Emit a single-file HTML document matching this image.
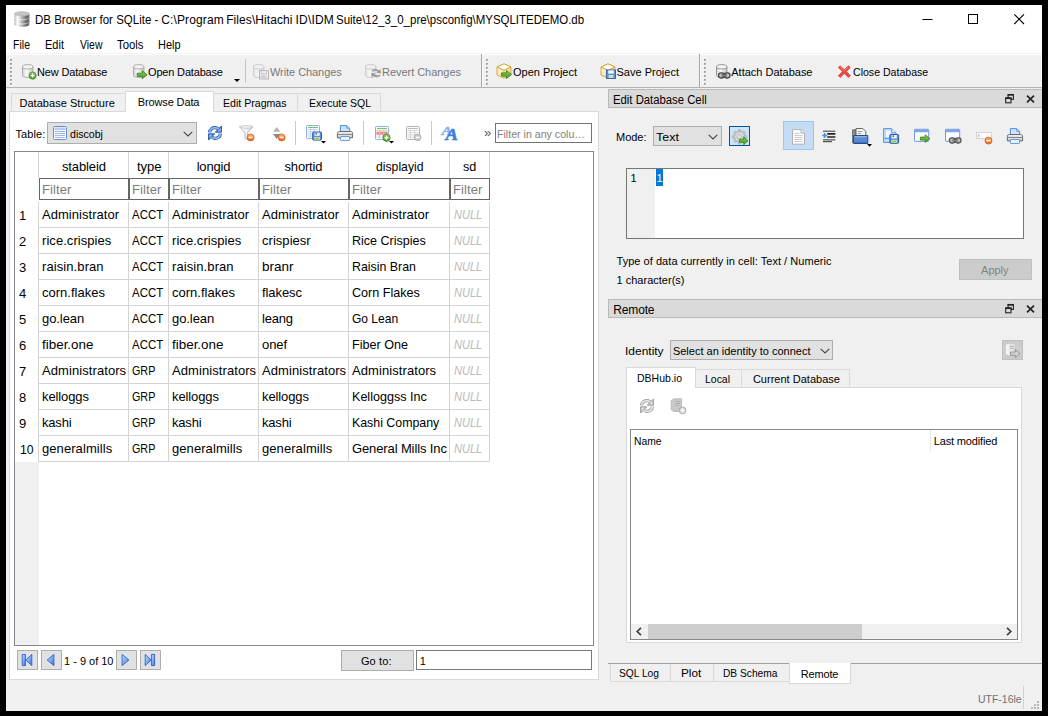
<!DOCTYPE html>
<html lang="en"><head><meta charset="utf-8"><title>DB Browser for SQLite</title>
<style>
html,body{margin:0;padding:0;background:#000}
body{width:1048px;height:716px;background:#000;position:relative;overflow:hidden;font-family:"Liberation Sans", sans-serif;font-size:11px;}
.a{position:absolute;}
.t{position:absolute;white-space:pre;line-height:20px;height:20px;transform-origin:0 50%;}
svg{position:absolute;overflow:visible}
</style></head>
<body>
<div class="a" style="left:6px;top:5px;width:1036px;height:706px;background:#f0f0f0;"></div>
<div class="a" style="left:6px;top:5px;width:1036px;height:49px;background:#ffffff;"></div>
<div class="a" style="left:6px;top:53px;width:1035px;height:1px;background:#f3f3f3;"></div>
<div class="a" style="left:6px;top:54px;width:1036px;height:1px;background:#ffffff;"></div>
<svg style="left:14px;top:10.500px" width="16" height="16" viewBox="0 0 16 16">
<defs><linearGradient id="dbg" x1="0" x2="1" y1="0" y2="0"><stop offset="0" stop-color="#b4b4b4"/><stop offset=".2" stop-color="#ffffff"/><stop offset=".5" stop-color="#b2b2b2"/><stop offset=".88" stop-color="#5c5c5c"/><stop offset="1" stop-color="#9a9a9a"/></linearGradient>
<linearGradient id="dbb" x1="0" x2="1" y1="0" y2="0"><stop offset="0" stop-color="#e8e8e8"/><stop offset=".3" stop-color="#ffffff"/><stop offset=".7" stop-color="#d0d0d0"/><stop offset="1" stop-color="#a8a8a8"/></linearGradient></defs>
<path d="M.4 2.600v10.600c0 1.500 3.400 2.600 7.600 2.600s7.600-1.100 7.600-2.600V2.600z" fill="url(#dbg)"/>
<path d="M.4 6.200c0 1.500 3.400 2.600 7.600 2.600s7.600-1.100 7.600-2.600M.4 10.400c0 1.500 3.400 2.600 7.600 2.600s7.600-1.100 7.600-2.600" fill="none" stroke="url(#dbb)" stroke-width=".9"/>
<ellipse cx="8" cy="2.700" rx="7.600" ry="2.100" fill="#c4c4c4" stroke="#b4b4b4" stroke-width=".5"/>
</svg>
<div id="title">
<span class="t" style="left:35.2px;top:10px;font-size:12px;color:#000;transform:scaleX(0.9580);">DB Browser for SQLite -</span>
 
<span class="t" style="left:161.2px;top:10px;font-size:12px;color:#000;letter-spacing:0.127px;">C:\Program</span>
 
<span class="t" style="left:226.2px;top:10px;font-size:12px;color:#000;letter-spacing:0.078px;">Files\Hitachi</span>
 
<span class="t" style="left:295.5px;top:10px;font-size:12px;color:#000;letter-spacing:0.191px;">ID\IDM</span>
 
<span class="t" style="left:336.4px;top:10px;font-size:12px;color:#000;transform:scaleX(0.9561);">Suite\12_3_0_pre\psconfig\MYSQLITEDEMO.db</span>
 
</div>
<svg style="left:915px;top:10px" width="120" height="20" viewBox="0 0 120 20">
<path d="M7.5 9.5h10" stroke="#000" stroke-width="1" fill="none"/>
<rect x="53.5" y="4.5" width="9" height="9" fill="none" stroke="#000" stroke-width="1"/>
<path d="M99.3 4.3l9.7 9.7M109 4.3l-9.7 9.7" stroke="#000" stroke-width="1.1" fill="none"/>
</svg>
<span class="t" style="left:12.5px;top:35px;font-size:12px;color:#000;transform:scaleX(0.8788);">File</span>
<span class="t" style="left:45px;top:35px;font-size:12px;color:#000;transform:scaleX(0.9184);">Edit</span>
<span class="t" style="left:79.5px;top:35px;font-size:12px;color:#000;transform:scaleX(0.8722);">View</span>
<span class="t" style="left:117px;top:35px;font-size:12px;color:#000;transform:scaleX(0.9459);">Tools</span>
<span class="t" style="left:157.5px;top:35px;font-size:12px;color:#000;transform:scaleX(0.9114);">Help</span>
<div class="a" style="left:6px;top:87px;width:1036px;height:1px;background:#b2b2b2;"></div>
<div class="a" style="left:1041px;top:55px;width:1px;height:32px;background:#ffffff;"></div>
<svg style="left:9.3px;top:58.200px" width="3" height="28" viewBox="0 0 3 28"><rect x="-.2" y="-0.2" width="2" height="2" fill="#ffffff"/><rect x=".9" y="0.9" width="1.800" height="1.800" fill="#929292"/><rect x="-.2" y="3.8" width="2" height="2" fill="#ffffff"/><rect x=".9" y="4.9" width="1.800" height="1.800" fill="#929292"/><rect x="-.2" y="7.8" width="2" height="2" fill="#ffffff"/><rect x=".9" y="8.9" width="1.800" height="1.800" fill="#929292"/><rect x="-.2" y="11.8" width="2" height="2" fill="#ffffff"/><rect x=".9" y="12.9" width="1.800" height="1.800" fill="#929292"/><rect x="-.2" y="15.8" width="2" height="2" fill="#ffffff"/><rect x=".9" y="16.9" width="1.800" height="1.800" fill="#929292"/><rect x="-.2" y="19.8" width="2" height="2" fill="#ffffff"/><rect x=".9" y="20.9" width="1.800" height="1.800" fill="#929292"/><rect x="-.2" y="23.8" width="2" height="2" fill="#ffffff"/><rect x=".9" y="24.9" width="1.800" height="1.800" fill="#929292"/></svg>
<svg style="left:485.3px;top:58.200px" width="3" height="28" viewBox="0 0 3 28"><rect x="-.2" y="-0.2" width="2" height="2" fill="#ffffff"/><rect x=".9" y="0.9" width="1.800" height="1.800" fill="#929292"/><rect x="-.2" y="3.8" width="2" height="2" fill="#ffffff"/><rect x=".9" y="4.9" width="1.800" height="1.800" fill="#929292"/><rect x="-.2" y="7.8" width="2" height="2" fill="#ffffff"/><rect x=".9" y="8.9" width="1.800" height="1.800" fill="#929292"/><rect x="-.2" y="11.8" width="2" height="2" fill="#ffffff"/><rect x=".9" y="12.9" width="1.800" height="1.800" fill="#929292"/><rect x="-.2" y="15.8" width="2" height="2" fill="#ffffff"/><rect x=".9" y="16.9" width="1.800" height="1.800" fill="#929292"/><rect x="-.2" y="19.8" width="2" height="2" fill="#ffffff"/><rect x=".9" y="20.9" width="1.800" height="1.800" fill="#929292"/><rect x="-.2" y="23.8" width="2" height="2" fill="#ffffff"/><rect x=".9" y="24.9" width="1.800" height="1.800" fill="#929292"/></svg>
<svg style="left:703.3px;top:58.200px" width="3" height="28" viewBox="0 0 3 28"><rect x="-.2" y="-0.2" width="2" height="2" fill="#ffffff"/><rect x=".9" y="0.9" width="1.800" height="1.800" fill="#929292"/><rect x="-.2" y="3.8" width="2" height="2" fill="#ffffff"/><rect x=".9" y="4.9" width="1.800" height="1.800" fill="#929292"/><rect x="-.2" y="7.8" width="2" height="2" fill="#ffffff"/><rect x=".9" y="8.9" width="1.800" height="1.800" fill="#929292"/><rect x="-.2" y="11.8" width="2" height="2" fill="#ffffff"/><rect x=".9" y="12.9" width="1.800" height="1.800" fill="#929292"/><rect x="-.2" y="15.8" width="2" height="2" fill="#ffffff"/><rect x=".9" y="16.9" width="1.800" height="1.800" fill="#929292"/><rect x="-.2" y="19.8" width="2" height="2" fill="#ffffff"/><rect x=".9" y="20.9" width="1.800" height="1.800" fill="#929292"/><rect x="-.2" y="23.8" width="2" height="2" fill="#ffffff"/><rect x=".9" y="24.9" width="1.800" height="1.800" fill="#929292"/></svg>
<div class="a" style="left:481px;top:54px;width:1px;height:33px;background:#a6a6a6;"></div>
<div class="a" style="left:482px;top:55px;width:1px;height:32px;background:#fafafa;"></div>
<div class="a" style="left:699px;top:54px;width:1px;height:33px;background:#a6a6a6;"></div>
<div class="a" style="left:700px;top:55px;width:1px;height:32px;background:#fafafa;"></div>
<div class="a" style="left:245px;top:59px;width:1px;height:24px;background:#c5c5c5;"></div>
<span class="t" style="left:37px;top:62px;font-size:11px;color:#000;letter-spacing:-0.151px;">New Database</span>
<span class="t" style="left:148px;top:62px;font-size:11px;color:#000;letter-spacing:-0.172px;">Open Database</span>
<span class="t" style="left:270px;top:62px;font-size:11px;color:#787878;letter-spacing:-0.064px;">Write Changes</span>
<span class="t" style="left:382px;top:62px;font-size:11px;color:#787878;letter-spacing:-0.038px;">Revert Changes</span>
<span class="t" style="left:513px;top:62px;font-size:11px;color:#000;letter-spacing:-0.018px;">Open Project</span>
<span class="t" style="left:616.5px;top:62px;font-size:11px;color:#000;letter-spacing:0.011px;">Save Project</span>
<span class="t" style="left:731.3px;top:62px;font-size:11px;color:#000;letter-spacing:-0.010px;">Attach Database</span>
<span class="t" style="left:853.3px;top:62px;font-size:11px;color:#000;transform:scaleX(0.9606);">Close Database</span>
<svg style="left:233.500px;top:79px" width="6" height="3" viewBox="0 0 6 3"><path d="M0 0h6L3 3z" fill="#000"/></svg>
<svg width="0" height="0" style="left:0;top:0"><defs>
<linearGradient id="cyl" x1="0" x2="1" y1="0" y2="0"><stop offset="0" stop-color="#d2d2d2"/><stop offset=".4" stop-color="#fafafa"/><stop offset="1" stop-color="#c4c4c4"/></linearGradient>
<linearGradient id="cyld" x1="0" x2="1" y1="0" y2="0"><stop offset="0" stop-color="#dcdcdc"/><stop offset=".4" stop-color="#f6f6f6"/><stop offset="1" stop-color="#d6d6d6"/></linearGradient>
<linearGradient id="grn" x1="0" x2="0" y1="0" y2="1"><stop offset="0" stop-color="#8fcf5a"/><stop offset="1" stop-color="#3f9a22"/></linearGradient>
<linearGradient id="org" x1="0" x2="0" y1="0" y2="1"><stop offset="0" stop-color="#ffb36b"/><stop offset="1" stop-color="#e8631a"/></linearGradient>
<linearGradient id="blu" x1="0" x2="0" y1="0" y2="1"><stop offset="0" stop-color="#9cc2f2"/><stop offset="1" stop-color="#3f78c9"/></linearGradient>
<linearGradient id="box" x1="0" x2="1" y1="0" y2="1"><stop offset="0" stop-color="#fff8dc"/><stop offset="1" stop-color="#f3d486"/></linearGradient>
<linearGradient id="prn" x1="0" x2="0" y1="0" y2="1"><stop offset="0" stop-color="#f4f4f4"/><stop offset="1" stop-color="#b9b9b9"/></linearGradient>
</defs></svg>
<svg style="left:22px;top:64px" width="16" height="16" viewBox="0 0 16 16"><path d="M.5 2.8v8.6c0 1.2 2.3 2.1 5.2 2.1s5.2-.9 5.2-2.1V2.8z" fill="url(#cyl)" stroke="#a6a6a6" stroke-width=".9"/><ellipse cx="5.7" cy="2.8" rx="5.2" ry="2.2" fill="#f2f2f2" stroke="#a6a6a6" stroke-width=".9"/><circle cx="10.6" cy="11.6" r="3.6" fill="url(#grn)" stroke="#3c8a20" stroke-width=".7"/><path d="M8.6 11.6h4M10.6 9.6v4" stroke="#fff" stroke-width="1.4"/></svg>
<svg style="left:133px;top:64px" width="16" height="16" viewBox="0 0 16 16"><path d="M.5 2.8v8.6c0 1.2 2.3 2.1 5.2 2.1s5.2-.9 5.2-2.1V2.8z" fill="url(#cyl)" stroke="#a6a6a6" stroke-width=".9"/><ellipse cx="5.7" cy="2.8" rx="5.2" ry="2.2" fill="#f2f2f2" stroke="#a6a6a6" stroke-width=".9"/><path transform="translate(4.2,6.8) scale(1.0)" d="M0 2.4h5V0l5 4-5 4V5.6H0z" fill="url(#grn)" stroke="#2f7d18" stroke-width=".8" stroke-linejoin="round"/></svg>
<svg style="left:253px;top:64px" width="16" height="16" viewBox="0 0 16 16"><g opacity=".55"><path d="M.5 2.8v8.6c0 1.2 2.3 2.1 5.2 2.1s5.2-.9 5.2-2.1V2.8z" fill="url(#cyld)" stroke="#a8a8a8" stroke-width=".9"/><ellipse cx="5.7" cy="2.8" rx="5.2" ry="2.2" fill="#f2f2f2" stroke="#a8a8a8" stroke-width=".9"/></g><g opacity=".6"><rect x="6.5" y="6.5" width="9" height="8.5" fill="#e4e4e4" stroke="#8e8e8e" stroke-width=".9"/><rect x="8.3" y="6.8" width="5.4" height="3" fill="#fafafa" stroke="#9a9a9a" stroke-width=".6"/><rect x="8.6" y="11.6" width="4.8" height="3.2" fill="#bdbdbd"/></g></svg>
<svg style="left:365px;top:64px" width="16" height="16" viewBox="0 0 16 16"><g opacity=".55"><path d="M.5 2.8v8.6c0 1.2 2.3 2.1 5.2 2.1s5.2-.9 5.2-2.1V2.8z" fill="url(#cyld)" stroke="#a8a8a8" stroke-width=".9"/><ellipse cx="5.7" cy="2.8" rx="5.2" ry="2.2" fill="#f2f2f2" stroke="#a8a8a8" stroke-width=".9"/></g><g opacity=".75" fill="none" stroke="#858585" stroke-width="1.900"><path d="M7.200 7.200c1.400-1.800 5-1.800 6.600.4"/><path d="M15 11c-1.400 1.800-5 1.800-6.600-.4"/></g><g opacity=".8" fill="#858585"><path d="M11.600 8.800l4.400.6-.6-4.400z"/><path d="M10.600 9.600l-4.400-.6.600 4.400z"/></g></svg>
<svg style="left:496px;top:63px" width="16" height="16" viewBox="0 0 16 16"><path d="M8 .8L1 4v8l7 3.2L15 12V4z" fill="url(#box)" stroke="#d2a23a" stroke-width=".9" stroke-linejoin="round"/><path d="M1 4l7 3.2L15 4M8 7.2v8" fill="none" stroke="#e2b554" stroke-width=".9"/><path d="M8 .8L1 4l7 3.2L15 4z" fill="#fffdf2" stroke="#d2a23a" stroke-width=".9" stroke-linejoin="round"/><path transform="translate(5.5,7.5) scale(1.0)" d="M0 2.4h5V0l5 4-5 4V5.6H0z" fill="url(#grn)" stroke="#2f7d18" stroke-width=".8" stroke-linejoin="round"/></svg>
<svg style="left:600px;top:63px" width="16" height="16" viewBox="0 0 16 16"><path d="M8 .8L1 4v8l7 3.2L15 12V4z" fill="url(#box)" stroke="#d2a23a" stroke-width=".9" stroke-linejoin="round"/><path d="M1 4l7 3.2L15 4M8 7.2v8" fill="none" stroke="#e2b554" stroke-width=".9"/><path d="M8 .8L1 4l7 3.2L15 4z" fill="#fffdf2" stroke="#d2a23a" stroke-width=".9" stroke-linejoin="round"/><rect x="6.5" y="7" width="9" height="8.5" fill="#5d8fdb" stroke="#2f5fae" stroke-width=".9"/><rect x="8.2" y="7.4" width="5.6" height="3.2" fill="#f4f7fc"/><rect x="8.6" y="12" width="4.8" height="3" fill="#cfe6b2"/></svg>
<svg style="left:716px;top:64px" width="16" height="16" viewBox="0 0 16 16"><path d="M.5 2.8v8.6c0 1.2 2.3 2.1 5.2 2.1s5.2-.9 5.2-2.1V2.8z" fill="url(#cyl)" stroke="#8e8e8e" stroke-width=".9"/><ellipse cx="5.7" cy="2.8" rx="5.2" ry="2.2" fill="#f2f2f2" stroke="#8e8e8e" stroke-width=".9"/><g fill="#c4c4c4" stroke="#4a4a4a" stroke-width="1.300"><rect x="2.600" y="8.800" width="5.800" height="5.200" rx="2.400"/><rect x="8.200" y="8.800" width="5.800" height="5.200" rx="2.400"/></g><path d="M5.600 11.400h5.400" stroke="#3c3c3c" stroke-width="2"/><path d="M5.600 11.400h5.400" stroke="#b0b0b0" stroke-width=".7"/></svg>
<svg style="left:838px;top:64.8px" width="16" height="16" viewBox="0 0 16 16"><g transform="scale(.9,.86)"><path d="M2.200.8L7 5.200 11.600.8l2 2L9.400 7.600l4.400 4.800-2.200 2.200L7 10 2.400 14.600.4 12.400l4.400-4.800L.4 3z" fill="#ea4a44" stroke="#d8302c" stroke-width=".7" stroke-linejoin="round"/><path d="M2.400 2.200L7 6.600l4.400-4.400" fill="none" stroke="#f58a84" stroke-width=".9"/></g></svg>
<div class="a" style="left:9px;top:111px;width:590px;height:569px;background:#ffffff;border:1px solid #d9d9d9;box-sizing:border-box;"></div>
<div class="a" style="left:11px;top:93px;width:116px;height:18px;background:#f0f0f0;border:1px solid #d9d9d9;box-sizing:border-box;border-bottom:none;"></div>
<div class="a" style="left:213px;top:93px;width:85px;height:18px;background:#f0f0f0;border:1px solid #d9d9d9;box-sizing:border-box;border-bottom:none;"></div>
<div class="a" style="left:297px;top:93px;width:84px;height:18px;background:#f0f0f0;border:1px solid #d9d9d9;box-sizing:border-box;border-bottom:none;"></div>
<div class="a" style="left:125px;top:91px;width:89px;height:21px;background:#ffffff;border:1px solid #d9d9d9;box-sizing:border-box;border-bottom:none;"></div>
<span class="t" style="left:19.5px;top:93px;font-size:11px;color:#000;letter-spacing:0.031px;">Database Structure</span>
<span class="t" style="left:137.7px;top:92px;font-size:11px;color:#000;letter-spacing:-0.118px;">Browse Data</span>
<span class="t" style="left:222.5px;top:93px;font-size:11px;color:#000;transform:scaleX(0.9617);">Edit Pragmas</span>
<span class="t" style="left:309px;top:93px;font-size:11px;color:#000;transform:scaleX(0.9564);">Execute SQL</span>
<span class="t" style="left:15.5px;top:124px;font-size:11px;color:#000;letter-spacing:0.108px;">Table:</span>
<div class="a" style="left:47px;top:122px;width:150px;height:22px;background:#e1e1e1;border:1px solid #adadad;box-sizing:border-box;"></div>
<svg style="left:53px;top:126px" width="14" height="14" viewBox="0 0 14 14">
<rect x=".5" y=".5" width="13" height="13" rx="1" fill="#fff" stroke="#6a8fd0"/>
<rect x="1.5" y="1.5" width="11" height="2.5" fill="#b9cdf0"/>
<path d="M2 5.5h10M2 7.5h10M2 9.5h10M2 11.5h10" stroke="#9db5e2" stroke-width="1"/>
<path d="M5 4v9" stroke="#c9d7f1" stroke-width="1"/>
</svg>
<span class="t" style="left:70.2px;top:124px;font-size:11px;color:#000;transform:scaleX(0.9606);">discobj</span>
<svg style="left:183px;top:131px" width="10" height="6" viewBox="0 0 10 6"><path d="M.7.8L5 5 9.3.8" fill="none" stroke="#444" stroke-width="1.1"/></svg>
<div class="a" style="left:295px;top:121px;width:1px;height:24px;background:#cacaca;"></div>
<div class="a" style="left:363px;top:121px;width:1px;height:24px;background:#cacaca;"></div>
<div class="a" style="left:431px;top:121px;width:1px;height:24px;background:#cacaca;"></div>
<span class="t" style="left:484.1px;top:123px;font-size:13px;color:#5c5c5c;">»</span>
<div class="a" style="left:495px;top:123px;width:97px;height:20px;background:#ffffff;border:1px solid #737373;box-sizing:border-box;"></div>
<span class="t" style="left:496.9px;top:124px;font-size:11px;color:#808080;transform:scaleX(0.9660);">Filter in any colu…</span>
<svg style="left:207px;top:125px" width="16" height="16" viewBox="0 0 16 16"><g opacity="1"><g fill="none" stroke="#2f62b4" stroke-width="3.300"><path d="M2.600 7.400C2.800 4.200 5.600 2.300 8.600 2.700c1.300.2 2.300.8 3.100 1.600"/><path d="M13.400 8.600c-.2 3.200-3 5.100-6 4.700-1.300-.2-2.300-.8-3.100-1.600"/></g><g fill="#2f62b4" stroke="#2f62b4" stroke-width="1" stroke-linejoin="round"><path d="M14.500 .9v6.300H8.300z"/><path d="M1.500 15.100V8.800h6.200z"/></g><g fill="none" stroke="#9cc0f2" stroke-width="1.500"><path d="M2.600 7.400C2.800 4.200 5.600 2.300 8.600 2.700c1.300.2 2.300.8 3.100 1.600"/><path d="M13.400 8.600c-.2 3.200-3 5.100-6 4.700-1.300-.2-2.300-.8-3.100-1.600"/></g><g fill="#9cc0f2"><path d="M13.700 2.800v3.600h-3.500z"/><path d="M2.300 13.200V9.600h3.500z"/></g></g></svg>
<svg width="0" height="0" style="left:0;top:0"><defs><linearGradient id="fun" x1="0" x2="1" y1="0" y2="0"><stop offset="0" stop-color="#fdfdfd"/><stop offset=".6" stop-color="#ececec"/><stop offset="1" stop-color="#d4d4d4"/></linearGradient></defs></svg>
<svg style="left:239px;top:125px" width="16" height="16" viewBox="0 0 16 16"><path d="M.6 1.800h13.200L8.600 8v6.600l-2.600-1V8z" fill="url(#fun)" stroke="#b4b4b4" stroke-width=".9" stroke-linejoin="round"/><ellipse cx="7.200" cy="1.900" rx="6.600" ry="1.300" fill="#f6f6f6" stroke="#bdbdbd" stroke-width=".8"/><circle cx="11.6" cy="12.4" r="3.5" fill="url(#org)" stroke="#d2541a" stroke-width=".7"/><path d="M9.6 12.4h4" stroke="#fff" stroke-width="1.5"/></svg>
<svg style="left:271px;top:125px" width="16" height="16" viewBox="0 0 16 16"><path d="M5.700 2l3.700 4.800H2z" fill="#b4b4b4"/><path d="M5.700 14l3.700-5H2z" fill="#8c8c8c"/><circle cx="10.6" cy="12.4" r="3.5" fill="url(#org)" stroke="#d2541a" stroke-width=".7"/><path d="M8.6 12.4h4" stroke="#fff" stroke-width="1.5"/></svg>
<svg style="left:305px;top:125px" width="18" height="16" viewBox="0 0 18 16"><rect x="1.5" y="0.5" width="13" height="13" rx=".8" fill="#fdfeff" stroke="#8fb0e6" stroke-width="1"/><path d="M3 2.5h10" stroke="#7cc35a" stroke-width="1.100"/><path d="M2.5 4.5h11" stroke="#b9c9e6" stroke-width=".8"/><path d="M2.5 6.7h11" stroke="#b9c9e6" stroke-width=".8"/><path d="M2.5 8.9h11" stroke="#b9c9e6" stroke-width=".8"/><path d="M2.5 11.100000000000001h11" stroke="#b9c9e6" stroke-width=".8"/><path d="M5.5 4v8.5M9.5 4v8.5" stroke="#b9c9e6" stroke-width=".8"/><rect x="7.7" y="7.1" width="8.8" height="8" rx=".8" fill="#5b8fe0" stroke="#2c5cb0" stroke-width="1"/><rect x="9.5" y="7.6" width="5.200000000000001" height="3.24" fill="#eef3fb"/><rect x="10.6" y="7.8999999999999995" width="1.200" height="1.800" fill="#2c5cb0"/><rect x="9.2" y="12.00" width="5.800000000000001" height="2.70" fill="#cfe59a"/><path d="M10.2 13.35h3.8000000000000007" stroke="#86b93a" stroke-width=".9"/></svg>
<svg style="left:321px;top:141.400px" width="5" height="3" viewBox="0 0 5 3"><path d="M0 0h5L2.500 2.600z" fill="#000"/></svg>
<svg style="left:337px;top:125px" width="16" height="16" viewBox="0 0 16 16"><g opacity="1"><path d="M3.400 .6h6.200l3 2.600V8H3.400z" fill="#cfe2fb" stroke="#4c8ae0" stroke-width="1" stroke-linejoin="round"/><path d="M9.600 .6v2.600h3" fill="#a9c9f5" stroke="#4c8ae0" stroke-width=".7"/><path d="M2.400 6.500h11.200c1.400 0 2 .8 2 2v4.300H.4V8.500c0-1.200.6-2 2-2z" fill="url(#prn)" stroke="#5c5c5c" stroke-width=".9"/><path d="M1 9.500h14" stroke="#8a8a8a" stroke-width="1"/><path d="M1 11h14" stroke="#f6f6f6" stroke-width=".8"/><rect x="3.400" y="11.600" width="9.200" height="3.800" rx=".6" fill="#f4f8fe" stroke="#4c8ae0" stroke-width=".9"/></g></svg>
<svg style="left:375px;top:126px" width="16" height="16" viewBox="0 0 16 16"><rect x="0.5" y="0.5" width="13" height="13" rx=".8" fill="#fdfeff" stroke="#8fb0e6" stroke-width="1"/><path d="M2 2.5h10" stroke="#7cc35a" stroke-width="1.100"/><path d="M1.5 4.5h11" stroke="#b9c9e6" stroke-width=".8"/><path d="M1.5 6.7h11" stroke="#b9c9e6" stroke-width=".8"/><path d="M1.5 8.9h11" stroke="#b9c9e6" stroke-width=".8"/><path d="M1.5 11.100000000000001h11" stroke="#b9c9e6" stroke-width=".8"/><rect x="1.5" y="5.7" width="11" height="3" fill="#f47a7a"/><path d="M2.5 7.2h9" stroke="#fbc0c0" stroke-width=".8" stroke-dasharray="2 1"/><path d="M4.5 4v8.5M8.5 4v8.5" stroke="#b9c9e6" stroke-width=".8"/><circle cx="11.5" cy="11.7" r="3.7" fill="url(#grn)" stroke="#3c8a20" stroke-width=".7"/><path d="M9.5 11.7h4M11.5 9.7v4" stroke="#fff" stroke-width="1.4"/></svg>
<svg style="left:389.300px;top:141.400px" width="5" height="3" viewBox="0 0 5 3"><path d="M0 0h5L2.500 2.600z" fill="#000"/></svg>
<svg style="left:406px;top:126px" width="16" height="16" viewBox="0 0 16 16"><rect x="0.5" y="0.5" width="13" height="13" rx=".8" fill="#fdfeff" stroke="#b2b2b2" stroke-width="1"/><path d="M2 2.5h10" stroke="#bcbcbc" stroke-width="1.100"/><path d="M1.5 4.5h11" stroke="#cfcfcf" stroke-width=".8"/><path d="M1.5 6.7h11" stroke="#cfcfcf" stroke-width=".8"/><path d="M1.5 8.9h11" stroke="#cfcfcf" stroke-width=".8"/><path d="M1.5 11.100000000000001h11" stroke="#cfcfcf" stroke-width=".8"/><path d="M4.5 4v8.5M8.5 4v8.5" stroke="#cfcfcf" stroke-width=".8"/><circle cx="11.7" cy="11.4" r="3.3" fill="#c9c9c9" stroke="#a8a8a8" stroke-width=".7"/><path d="M9.7 11.4h4" stroke="#fff" stroke-width="1.5"/></svg>
<svg style="left:442px;top:125px" width="17" height="16" viewBox="0 0 17 16">
<text x="-.6" y="10" font-family="Liberation Serif, serif" font-size="13.500" font-weight="bold" font-style="italic" fill="#86b8f0" stroke="#86b8f0" stroke-width=".5" textLength="10.500" lengthAdjust="spacingAndGlyphs">A</text>
<text x="3.400" y="15" font-family="Liberation Serif, serif" font-size="16" font-weight="bold" font-style="italic" fill="#3b7ede" stroke="#3b7ede" stroke-width=".5" textLength="12.500" lengthAdjust="spacingAndGlyphs">A</text>
</svg>
<div class="a" style="left:14px;top:151px;width:580px;height:495px;background:#ffffff;border:1px solid #828790;box-sizing:border-box;"></div>
<div class="a" style="left:15px;top:462px;width:24px;height:183px;background:#f0f0f0;"></div>
<div class="a" style="left:38px;top:152px;width:1px;height:26px;background:#d4d4d4;"></div>
<div class="a" style="left:38px;top:202px;width:1px;height:260px;background:#d4d4d4;"></div>
<div class="a" style="left:128px;top:152px;width:1px;height:26px;background:#d4d4d4;"></div>
<div class="a" style="left:128px;top:202px;width:1px;height:260px;background:#d4d4d4;"></div>
<div class="a" style="left:168px;top:152px;width:1px;height:26px;background:#d4d4d4;"></div>
<div class="a" style="left:168px;top:202px;width:1px;height:260px;background:#d4d4d4;"></div>
<div class="a" style="left:258px;top:152px;width:1px;height:26px;background:#d4d4d4;"></div>
<div class="a" style="left:258px;top:202px;width:1px;height:260px;background:#d4d4d4;"></div>
<div class="a" style="left:348px;top:152px;width:1px;height:26px;background:#d4d4d4;"></div>
<div class="a" style="left:348px;top:202px;width:1px;height:260px;background:#d4d4d4;"></div>
<div class="a" style="left:449px;top:152px;width:1px;height:26px;background:#d4d4d4;"></div>
<div class="a" style="left:449px;top:202px;width:1px;height:260px;background:#d4d4d4;"></div>
<div class="a" style="left:489px;top:152px;width:1px;height:26px;background:#d4d4d4;"></div>
<div class="a" style="left:489px;top:202px;width:1px;height:260px;background:#d4d4d4;"></div>
<div class="a" style="left:39px;top:227px;width:451px;height:1px;background:#d4d4d4;"></div>
<div class="a" style="left:39px;top:253px;width:451px;height:1px;background:#d4d4d4;"></div>
<div class="a" style="left:39px;top:279px;width:451px;height:1px;background:#d4d4d4;"></div>
<div class="a" style="left:39px;top:305px;width:451px;height:1px;background:#d4d4d4;"></div>
<div class="a" style="left:39px;top:331px;width:451px;height:1px;background:#d4d4d4;"></div>
<div class="a" style="left:39px;top:357px;width:451px;height:1px;background:#d4d4d4;"></div>
<div class="a" style="left:39px;top:383px;width:451px;height:1px;background:#d4d4d4;"></div>
<div class="a" style="left:39px;top:409px;width:451px;height:1px;background:#d4d4d4;"></div>
<div class="a" style="left:39px;top:435px;width:451px;height:1px;background:#d4d4d4;"></div>
<div class="a" style="left:39px;top:461px;width:451px;height:1px;background:#d4d4d4;"></div>
<span class="t" style="left:61.9px;top:157px;font-size:13px;color:#000;letter-spacing:-0.116px;">stableid</span>
<span class="t" style="left:136.9px;top:157px;font-size:13px;color:#000;letter-spacing:0.007px;">type</span>
<span class="t" style="left:196.7px;top:157px;font-size:13px;color:#000;letter-spacing:-0.201px;">longid</span>
<span class="t" style="left:284.5px;top:157px;font-size:13px;color:#000;letter-spacing:-0.172px;">shortid</span>
<span class="t" style="left:375.8px;top:157px;font-size:13px;color:#000;transform:scaleX(0.9389);">displayid</span>
<span class="t" style="left:463.2px;top:157px;font-size:13px;color:#000;transform:scaleX(0.9684);">sd</span>
<div class="a" style="left:39px;top:178px;width:90px;height:22px;background:#ffffff;border:1px solid #666666;box-sizing:border-box;"></div>
<span class="t" style="left:42.1px;top:180px;font-size:13px;color:#7c7c7c;letter-spacing:0.062px;">Filter</span>
<div class="a" style="left:129px;top:178px;width:40px;height:22px;background:#ffffff;border:1px solid #666666;box-sizing:border-box;"></div>
<span class="t" style="left:132.1px;top:180px;font-size:13px;color:#7c7c7c;letter-spacing:0.062px;">Filter</span>
<div class="a" style="left:169px;top:178px;width:90px;height:22px;background:#ffffff;border:1px solid #666666;box-sizing:border-box;"></div>
<span class="t" style="left:172.1px;top:180px;font-size:13px;color:#7c7c7c;letter-spacing:0.062px;">Filter</span>
<div class="a" style="left:259px;top:178px;width:90px;height:22px;background:#ffffff;border:1px solid #666666;box-sizing:border-box;"></div>
<span class="t" style="left:262.1px;top:180px;font-size:13px;color:#7c7c7c;letter-spacing:0.062px;">Filter</span>
<div class="a" style="left:349px;top:178px;width:101px;height:22px;background:#ffffff;border:1px solid #666666;box-sizing:border-box;"></div>
<span class="t" style="left:352.1px;top:180px;font-size:13px;color:#7c7c7c;letter-spacing:0.062px;">Filter</span>
<div class="a" style="left:450px;top:178px;width:40px;height:22px;background:#ffffff;border:1px solid #666666;box-sizing:border-box;"></div>
<span class="t" style="left:453.1px;top:180px;font-size:13px;color:#7c7c7c;letter-spacing:0.062px;">Filter</span>
<span class="t" style="left:18.9px;top:206px;font-size:13px;color:#000;">1</span>
<span class="t" style="left:42px;top:205px;font-size:13px;color:#000;letter-spacing:0.035px;">Administrator</span>
<span class="t" style="left:132px;top:205px;font-size:13px;color:#000;transform:scaleX(0.8816);">ACCT</span>
<span class="t" style="left:172px;top:205px;font-size:13px;color:#000;letter-spacing:0.035px;">Administrator</span>
<span class="t" style="left:262px;top:205px;font-size:13px;color:#000;letter-spacing:0.035px;">Administrator</span>
<span class="t" style="left:352px;top:205px;font-size:13px;color:#000;letter-spacing:0.035px;">Administrator</span>
<span class="t" style="left:453.5px;top:205px;font-size:13px;color:#bababa;transform:scaleX(0.8481);font-style:italic;">NULL</span>
<span class="t" style="left:18.9px;top:232px;font-size:13px;color:#000;">2</span>
<span class="t" style="left:42px;top:231px;font-size:13px;color:#000;letter-spacing:0.056px;">rice.crispies</span>
<span class="t" style="left:132px;top:231px;font-size:13px;color:#000;transform:scaleX(0.8816);">ACCT</span>
<span class="t" style="left:172px;top:231px;font-size:13px;color:#000;letter-spacing:0.056px;">rice.crispies</span>
<span class="t" style="left:262px;top:231px;font-size:13px;color:#000;letter-spacing:0.037px;">crispiesr</span>
<span class="t" style="left:352px;top:231px;font-size:13px;color:#000;transform:scaleX(0.9637);">Rice Crispies</span>
<span class="t" style="left:453.5px;top:231px;font-size:13px;color:#bababa;transform:scaleX(0.8481);font-style:italic;">NULL</span>
<span class="t" style="left:18.9px;top:258px;font-size:13px;color:#000;">3</span>
<span class="t" style="left:42px;top:257px;font-size:13px;color:#000;letter-spacing:0.090px;">raisin.bran</span>
<span class="t" style="left:132px;top:257px;font-size:13px;color:#000;transform:scaleX(0.8816);">ACCT</span>
<span class="t" style="left:172px;top:257px;font-size:13px;color:#000;letter-spacing:0.090px;">raisin.bran</span>
<span class="t" style="left:262px;top:257px;font-size:13px;color:#000;transform:scaleX(1.0376);">branr</span>
<span class="t" style="left:352px;top:257px;font-size:13px;color:#000;transform:scaleX(0.9523);">Raisin Bran</span>
<span class="t" style="left:453.5px;top:257px;font-size:13px;color:#bababa;transform:scaleX(0.8481);font-style:italic;">NULL</span>
<span class="t" style="left:18.9px;top:284px;font-size:13px;color:#000;">4</span>
<span class="t" style="left:42px;top:283px;font-size:13px;color:#000;letter-spacing:0.003px;">corn.flakes</span>
<span class="t" style="left:132px;top:283px;font-size:13px;color:#000;transform:scaleX(0.8816);">ACCT</span>
<span class="t" style="left:172px;top:283px;font-size:13px;color:#000;letter-spacing:0.003px;">corn.flakes</span>
<span class="t" style="left:262px;top:283px;font-size:13px;color:#000;letter-spacing:-0.078px;">flakesc</span>
<span class="t" style="left:352px;top:283px;font-size:13px;color:#000;transform:scaleX(0.9689);">Corn Flakes</span>
<span class="t" style="left:453.5px;top:283px;font-size:13px;color:#bababa;transform:scaleX(0.8481);font-style:italic;">NULL</span>
<span class="t" style="left:18.9px;top:310px;font-size:13px;color:#000;">5</span>
<span class="t" style="left:42px;top:309px;font-size:13px;color:#000;letter-spacing:-0.076px;">go.lean</span>
<span class="t" style="left:132px;top:309px;font-size:13px;color:#000;transform:scaleX(0.8816);">ACCT</span>
<span class="t" style="left:172px;top:309px;font-size:13px;color:#000;letter-spacing:-0.076px;">go.lean</span>
<span class="t" style="left:262px;top:309px;font-size:13px;color:#000;letter-spacing:-0.203px;">leang</span>
<span class="t" style="left:352px;top:309px;font-size:13px;color:#000;transform:scaleX(0.9243);">Go Lean</span>
<span class="t" style="left:453.5px;top:309px;font-size:13px;color:#bababa;transform:scaleX(0.8481);font-style:italic;">NULL</span>
<span class="t" style="left:18.9px;top:336px;font-size:13px;color:#000;">6</span>
<span class="t" style="left:42px;top:335px;font-size:13px;color:#000;transform:scaleX(1.0326);">fiber.one</span>
<span class="t" style="left:132px;top:335px;font-size:13px;color:#000;transform:scaleX(0.8816);">ACCT</span>
<span class="t" style="left:172px;top:335px;font-size:13px;color:#000;transform:scaleX(1.0326);">fiber.one</span>
<span class="t" style="left:262px;top:335px;font-size:13px;color:#000;letter-spacing:-0.071px;">onef</span>
<span class="t" style="left:352px;top:335px;font-size:13px;color:#000;transform:scaleX(0.9686);">Fiber One</span>
<span class="t" style="left:453.5px;top:335px;font-size:13px;color:#bababa;transform:scaleX(0.8481);font-style:italic;">NULL</span>
<span class="t" style="left:18.9px;top:362px;font-size:13px;color:#000;">7</span>
<span class="t" style="left:42px;top:361px;font-size:13px;color:#000;letter-spacing:0.079px;">Administrators</span>
<span class="t" style="left:132px;top:361px;font-size:13px;color:#000;transform:scaleX(0.8271);">GRP</span>
<span class="t" style="left:172px;top:361px;font-size:13px;color:#000;letter-spacing:0.079px;">Administrators</span>
<span class="t" style="left:262px;top:361px;font-size:13px;color:#000;letter-spacing:0.079px;">Administrators</span>
<span class="t" style="left:352px;top:361px;font-size:13px;color:#000;letter-spacing:0.079px;">Administrators</span>
<span class="t" style="left:453.5px;top:361px;font-size:13px;color:#bababa;transform:scaleX(0.8481);font-style:italic;">NULL</span>
<span class="t" style="left:18.9px;top:388px;font-size:13px;color:#000;">8</span>
<span class="t" style="left:42px;top:387px;font-size:13px;color:#000;letter-spacing:-0.100px;">kelloggs</span>
<span class="t" style="left:132px;top:387px;font-size:13px;color:#000;transform:scaleX(0.8271);">GRP</span>
<span class="t" style="left:172px;top:387px;font-size:13px;color:#000;letter-spacing:-0.100px;">kelloggs</span>
<span class="t" style="left:262px;top:387px;font-size:13px;color:#000;letter-spacing:-0.100px;">kelloggs</span>
<span class="t" style="left:352px;top:387px;font-size:13px;color:#000;transform:scaleX(0.9660);">Kelloggss Inc</span>
<span class="t" style="left:453.5px;top:387px;font-size:13px;color:#bababa;transform:scaleX(0.8481);font-style:italic;">NULL</span>
<span class="t" style="left:18.9px;top:414px;font-size:13px;color:#000;">9</span>
<span class="t" style="left:42px;top:413px;font-size:13px;color:#000;letter-spacing:-0.190px;">kashi</span>
<span class="t" style="left:132px;top:413px;font-size:13px;color:#000;transform:scaleX(0.8271);">GRP</span>
<span class="t" style="left:172px;top:413px;font-size:13px;color:#000;letter-spacing:-0.190px;">kashi</span>
<span class="t" style="left:262px;top:413px;font-size:13px;color:#000;letter-spacing:-0.190px;">kashi</span>
<span class="t" style="left:352px;top:413px;font-size:13px;color:#000;transform:scaleX(0.9512);">Kashi Company</span>
<span class="t" style="left:453.5px;top:413px;font-size:13px;color:#bababa;transform:scaleX(0.8481);font-style:italic;">NULL</span>
<span class="t" style="left:19.5px;top:440px;font-size:13px;color:#000;transform:scaleX(0.9400);">10</span>
<span class="t" style="left:42px;top:439px;font-size:13px;color:#000;letter-spacing:0.075px;">generalmills</span>
<span class="t" style="left:132px;top:439px;font-size:13px;color:#000;transform:scaleX(0.8271);">GRP</span>
<span class="t" style="left:172px;top:439px;font-size:13px;color:#000;letter-spacing:0.075px;">generalmills</span>
<span class="t" style="left:262px;top:439px;font-size:13px;color:#000;letter-spacing:0.075px;">generalmills</span>
<span class="t" style="left:352px;top:439px;font-size:13px;color:#000;letter-spacing:-0.120px;">General Mills Inc</span>
<span class="t" style="left:453.5px;top:439px;font-size:13px;color:#bababa;transform:scaleX(0.8481);font-style:italic;">NULL</span>
<svg width="0" height="0" style="left:0;top:0"><defs><linearGradient id="nv" x1="0" x2="1" y1="0" y2="1"><stop offset="0" stop-color="#c6dcf8"/><stop offset=".6" stop-color="#74a2ea"/><stop offset="1" stop-color="#2c62d4"/></linearGradient></defs></svg>
<div class="a" style="left:17px;top:650px;width:21px;height:20px;background:#e1e1e1;border:1px solid #adadad;box-sizing:border-box;"></div>
<svg style="left:17px;top:650px" width="21" height="20" viewBox="0 0 21 20"><rect x="5.2" y="4.400" width="3.200" height="11.200" fill="url(#nv)" stroke="#2a62d2" stroke-width=".9" stroke-linejoin="round"/><path d="M14.8 4.400L8.8 10l6.0 5.600z" fill="url(#nv)" stroke="#2a62d2" stroke-width=".9" stroke-linejoin="round"/></svg>
<div class="a" style="left:41px;top:650px;width:21px;height:20px;background:#e1e1e1;border:1px solid #adadad;box-sizing:border-box;"></div>
<svg style="left:41px;top:650px" width="21" height="20" viewBox="0 0 21 20"><path d="M12.9 4.400L6.2 10l6.7 5.600z" fill="url(#nv)" stroke="#2a62d2" stroke-width=".9" stroke-linejoin="round"/></svg>
<div class="a" style="left:116px;top:650px;width:21px;height:20px;background:#e1e1e1;border:1px solid #adadad;box-sizing:border-box;"></div>
<svg style="left:116px;top:650px" width="21" height="20" viewBox="0 0 21 20"><path d="M6.1 4.400L12.9 10l-6.800000000000001 5.600z" fill="url(#nv)" stroke="#2a62d2" stroke-width=".9" stroke-linejoin="round"/></svg>
<div class="a" style="left:140px;top:650px;width:21px;height:20px;background:#e1e1e1;border:1px solid #adadad;box-sizing:border-box;"></div>
<svg style="left:140px;top:650px" width="21" height="20" viewBox="0 0 21 20"><path d="M5.2 4.400L11.2 10l-5.999999999999999 5.600z" fill="url(#nv)" stroke="#2a62d2" stroke-width=".9" stroke-linejoin="round"/><rect x="11.4" y="4.400" width="3.200" height="11.200" fill="url(#nv)" stroke="#2a62d2" stroke-width=".9" stroke-linejoin="round"/></svg>
<span class="t" style="left:64.1px;top:651px;font-size:11px;color:#000;letter-spacing:-0.015px;">1 - 9 of 10</span>
<div class="a" style="left:341px;top:650px;width:73px;height:21px;background:#e1e1e1;border:1px solid #adadad;box-sizing:border-box;"></div>
<span class="t" style="left:360.9px;top:651px;font-size:11px;color:#000;letter-spacing:0.126px;">Go to:</span>
<div class="a" style="left:416px;top:650px;width:176px;height:20px;background:#ffffff;border:1px solid #7a7a7a;box-sizing:border-box;"></div>
<span class="t" style="left:419.7px;top:651px;font-size:11px;color:#000;">1</span>
<div class="a" style="left:608px;top:89px;width:434px;height:19px;background:#dadada;border:1px solid #b9b9b9;box-sizing:border-box;border-right:none;"></div>
<span class="t" style="left:613.3px;top:90px;font-size:12px;color:#000;transform:scaleX(0.9427);">Edit Database Cell</span>
<svg style="left:1004.600px;top:94px" width="10" height="10" viewBox="0 0 10 10"><rect x="3.100" y=".6" width="5.300" height="4.800" fill="none" stroke="#222" stroke-width="1.100"/><path d="M2.600 .8h6.300" stroke="#222" stroke-width="1.700"/><rect x=".7" y="4" width="5.300" height="4.800" fill="#dadada" stroke="#222" stroke-width="1.100"/><path d="M.2 4.200h6.300" stroke="#222" stroke-width="1.700"/></svg>
<svg style="left:1025.600px;top:95px" width="9" height="8" viewBox="0 0 9 8"><path d="M1 .7l7 6.600M8 .7L1 7.300" stroke="#222" stroke-width="1.700" fill="none"/></svg>
<div class="a" style="left:608px;top:299px;width:434px;height:19px;background:#dadada;border:1px solid #b9b9b9;box-sizing:border-box;border-right:none;"></div>
<span class="t" style="left:613.3px;top:300px;font-size:12px;color:#000;letter-spacing:-0.166px;">Remote</span>
<svg style="left:1004.600px;top:304px" width="10" height="10" viewBox="0 0 10 10"><rect x="3.100" y=".6" width="5.300" height="4.800" fill="none" stroke="#222" stroke-width="1.100"/><path d="M2.600 .8h6.300" stroke="#222" stroke-width="1.700"/><rect x=".7" y="4" width="5.300" height="4.800" fill="#dadada" stroke="#222" stroke-width="1.100"/><path d="M.2 4.200h6.300" stroke="#222" stroke-width="1.700"/></svg>
<svg style="left:1025.600px;top:305px" width="9" height="8" viewBox="0 0 9 8"><path d="M1 .7l7 6.600M8 .7L1 7.300" stroke="#222" stroke-width="1.700" fill="none"/></svg>
<span class="t" style="left:616.1px;top:127px;font-size:11px;color:#000;letter-spacing:-0.045px;">Mode:</span>
<div class="a" style="left:653px;top:126px;width:69px;height:20px;background:#e1e1e1;border:1px solid #adadad;box-sizing:border-box;"></div>
<span class="t" style="left:655.9px;top:127px;font-size:11px;color:#000;transform:scaleX(1.1393);">Text</span>
<svg style="left:708px;top:134px" width="10" height="6" viewBox="0 0 10 6"><path d="M.7.800L5 5 9.300.800" fill="none" stroke="#444" stroke-width="1.100"/></svg>
<div class="a" style="left:729px;top:126px;width:21px;height:20px;background:#cce4f7;border:1px solid #00549a;box-sizing:border-box;"></div>
<svg style="left:731px;top:128px" width="18" height="18" viewBox="0 0 18 18">
<g transform="translate(0,.8)"><g fill="#cdcdcd" stroke="#a2a2a2" stroke-width=".7">
<g><rect x="7.100" y=".8" width="2.800" height="4" rx=".9"/><rect x="7.100" y="11.200" width="2.800" height="4" rx=".9"/><rect x="1.300" y="6.600" width="4" height="2.800" rx=".9"/><rect x="11.700" y="6.600" width="4" height="2.800" rx=".9"/>
<g transform="rotate(45 8.500 8)"><rect x="7.100" y=".8" width="2.800" height="4" rx=".9"/><rect x="7.100" y="11.200" width="2.800" height="4" rx=".9"/><rect x="1.300" y="6.600" width="4" height="2.800" rx=".9"/><rect x="11.700" y="6.600" width="4" height="2.800" rx=".9"/></g></g>
<circle cx="8.500" cy="8" r="5.200"/></g>
<circle cx="8.500" cy="8" r="4.700" fill="#d6d6d6"/><circle cx="8.500" cy="8" r="2.200" fill="#cfe5f8" stroke="#b4b4b4" stroke-width=".7"/></g>
<path transform="translate(8.400,8.800) scale(.86,.98)" d="M0 2.400h5V0l5 4-5 4V5.600H0z" fill="url(#grn)" stroke="#2f8a14" stroke-width=".9" stroke-linejoin="round"/>
</svg>
<div class="a" style="left:783px;top:121px;width:31px;height:29px;background:#c5ddf4;border:1px solid #99c9ef;box-sizing:border-box;"></div>
<svg style="left:791px;top:129px" width="16" height="16" viewBox="0 0 16 16"><g opacity="1"><path d="M1.500 .6h8.400l3.600 3.600v11H1.500z" fill="#fdfdfd" stroke="#b0b0b0" stroke-width="1"/><path d="M9.900 .6v3.600h3.600" fill="#e4e4e4" stroke="#b0b0b0" stroke-width=".8"/><path d="M3.600 4.500h4.600M3.600 6.500h7.800M3.600 8.500h7.800M3.600 10.500h7.800M3.600 12.500h7.800" stroke="#c4c4c4" stroke-width=".9"/></g></svg>
<svg style="left:822px;top:129px" width="16" height="16" viewBox="0 0 16 16"><path d="M1 2.200h12.400M1 10.900h12.400M1 12.700h9" stroke="#222" stroke-width=".9"/><path d="M5.200 4.900h8.200M5.200 8h8.200" stroke="#222" stroke-width="1.700"/><path d="M.2 6.500h2.200" stroke="#4a90e6" stroke-width="1.400"/><path d="M2 4.100l3 2.400-3 2.400z" fill="#4a90e6" stroke="#3b7fd6" stroke-width=".5"/></svg>
<svg style="left:852px;top:128px" width="17" height="16" viewBox="0 0 17 16"><path d="M.6 1.800h3.600v13H.6z" fill="#8c8c8c" stroke="#5a5a5a" stroke-width=".8"/><path d="M4 .5h6.800l3 3V9H4z" fill="#f2f2f2" stroke="#5c5c5c" stroke-width=".9"/><path d="M5.800 3.500h4.400M5.800 5.500h3.400" stroke="#9a9a9a" stroke-width=".9"/><path d="M1.600 7.500h14.200v8H1.600z" fill="#5a8ad2" stroke="#274a8c" stroke-width="1" stroke-linejoin="round"/><path d="M2.600 8.800h12.200" stroke="#9fc0ee" stroke-width="1"/><path d="M2.600 14.300h12.200" stroke="#3f6fb8" stroke-width="1"/></svg>
<svg style="left:867px;top:144px" width="5" height="3" viewBox="0 0 5 3"><path d="M0 0h5L2.500 2.800z" fill="#000"/></svg>
<svg style="left:883px;top:128px" width="17" height="16" viewBox="0 0 17 16"><path d="M.6 .6h8l4.400 4.200v9.600H.6z" fill="#c3dbf8" stroke="#5c93e0" stroke-width="1"/><path d="M3 2.600h4.600v9.600H3z" fill="#eef5fe"/><path d="M8.600 .6v4.200h4.400" fill="#dbe9fb" stroke="#5c93e0" stroke-width=".8"/><path d="M1.600 10.500h4.400" stroke="#4aa3ec" stroke-width="1.600"/><rect x="6.8" y="6.5" width="8.8" height="8.8" rx=".8" fill="#5b8fe0" stroke="#2c5cb0" stroke-width="1"/><rect x="8.6" y="7" width="5.200000000000001" height="3.53" fill="#eef3fb"/><rect x="9.7" y="7.3" width="1.200" height="1.800" fill="#2c5cb0"/><rect x="8.3" y="11.88" width="5.800000000000001" height="2.94" fill="#cfe59a"/><path d="M9.3 13.35h3.8000000000000007" stroke="#86b93a" stroke-width=".9"/></svg>
<svg style="left:914px;top:128px" width="16" height="16" viewBox="0 0 16 16"><rect x=".5" y="1.300" width="14.200" height="12" rx=".6" fill="#fbfcfe" stroke="#6f97dc" stroke-width="1"/><rect x="1" y="1.800" width="13.200" height="2.400" fill="#7ea6e8"/><path d="M1 12.300h13" stroke="#dfe8f6" stroke-width="1"/><path transform="translate(6.4,6.8) scale(0.95)" d="M0 2.4h5V0l5 4-5 4V5.6H0z" fill="url(#grn)" stroke="#2f7d18" stroke-width=".8" stroke-linejoin="round"/></svg>
<svg style="left:945px;top:128px" width="17" height="16" viewBox="0 0 17 16"><rect x=".5" y="1.300" width="14.200" height="12" rx=".6" fill="#fbfcfe" stroke="#6f97dc" stroke-width="1"/><rect x="1" y="1.800" width="13.200" height="2.400" fill="#7ea6e8"/><path d="M1 12.300h13" stroke="#dfe8f6" stroke-width="1"/><g fill="#bdbdbd" stroke="#565656" stroke-width="1.300"><rect x="4.400" y="9.800" width="5.800" height="5.200" rx="2.400"/><rect x="10.200" y="9.800" width="5.800" height="5.200" rx="2.400"/></g><path d="M7.400 12.400h5.600" stroke="#4a4a4a" stroke-width="1.900"/><path d="M7.400 12.400h5.600" stroke="#a8a8a8" stroke-width=".7"/></svg>
<svg style="left:976px;top:129px" width="16" height="16" viewBox="0 0 16 16"><rect x=".5" y="3.500" width="15" height="6" fill="#fbfbfb" stroke="#cfcfcf" stroke-width=".9"/><path d="M2.800 5v3" stroke="#a8a8a8" stroke-width=".9"/><circle cx="12.5" cy="11.6" r="3.5" fill="url(#org)" stroke="#d2541a" stroke-width=".7"/><path d="M10.5 11.6h4" stroke="#fff" stroke-width="1.5"/></svg>
<svg style="left:1007px;top:128px" width="16" height="16" viewBox="0 0 16 16"><g opacity="1"><path d="M3.400 .6h6.200l3 2.600V8H3.400z" fill="#cfe2fb" stroke="#4c8ae0" stroke-width="1" stroke-linejoin="round"/><path d="M9.600 .6v2.600h3" fill="#a9c9f5" stroke="#4c8ae0" stroke-width=".7"/><path d="M2.400 6.500h11.200c1.400 0 2 .8 2 2v4.300H.4V8.500c0-1.200.6-2 2-2z" fill="url(#prn)" stroke="#5c5c5c" stroke-width=".9"/><path d="M1 9.500h14" stroke="#8a8a8a" stroke-width="1"/><path d="M1 11h14" stroke="#f6f6f6" stroke-width=".8"/><rect x="3.400" y="11.600" width="9.200" height="3.800" rx=".6" fill="#f4f8fe" stroke="#4c8ae0" stroke-width=".9"/></g></svg>
<div class="a" style="left:626px;top:168px;width:398px;height:71px;background:#ffffff;border:1px solid #767676;box-sizing:border-box;"></div>
<div class="a" style="left:627px;top:169px;width:28px;height:69px;background:#f0f0f0;"></div>
<span class="t" style="left:630.5px;top:168px;font-size:11px;color:#000;">1</span>
<div class="a" style="left:656px;top:169px;width:7px;height:17px;background:#0078d7;"></div>
<span class="t" style="left:656.5px;top:168px;font-size:11px;color:#ffffff;">1</span>
<span class="t" style="left:616.5px;top:251px;font-size:11px;color:#000;letter-spacing:0.041px;">Type of data currently in cell: Text / Numeric</span>
<span class="t" style="left:616.5px;top:270px;font-size:11px;color:#000;letter-spacing:0.011px;">1 character(s)</span>
<div class="a" style="left:959px;top:259px;width:73px;height:21px;background:#cccccc;border:1px solid #bfbfbf;box-sizing:border-box;"></div>
<span class="t" style="left:981.1px;top:260px;font-size:11px;color:#838383;letter-spacing:-0.033px;">Apply</span>
<span class="t" style="left:624.9px;top:341px;font-size:11px;color:#000;transform:scaleX(1.0883);">Identity</span>
<div class="a" style="left:670px;top:340px;width:163px;height:20px;background:#e1e1e1;border:1px solid #adadad;box-sizing:border-box;"></div>
<span class="t" style="left:672.9px;top:341px;font-size:11px;color:#000;">Select an identity to connect</span>
<svg style="left:819.500px;top:348px" width="10" height="6" viewBox="0 0 10 6"><path d="M.7.800L5 5 9.300.800" fill="none" stroke="#444" stroke-width="1.100"/></svg>
<div class="a" style="left:1002px;top:340px;width:21px;height:20px;background:#cccccc;border:1px solid #bfbfbf;box-sizing:border-box;"></div>
<svg style="left:1004px;top:342px" width="18" height="16" viewBox="0 0 18 16"><path d="M1.800 3L5 1.400h6.200v9.600L5 13.600 1.800 12z" fill="#e6e6e6" stroke="#c2c2c2" stroke-width=".6" stroke-linejoin="round"/><path d="M1.800 3L5 1.400v12.200L1.800 12z" fill="#f2f2f2"/><path d="M6 4.300h4M6 6.300h4" stroke="#b2b2b2" stroke-width="1"/><path transform="translate(6.600,7.600) scale(.94,1.020)" d="M0 2.400h5V0l5 4-5 4V5.600H0z" fill="#d2d2d2" stroke="#8e8e8e" stroke-width=".9" stroke-linejoin="round"/></svg>
<div class="a" style="left:626px;top:387px;width:396px;height:256px;background:#ffffff;border:1px solid #d9d9d9;box-sizing:border-box;"></div>
<div class="a" style="left:695px;top:369px;width:47px;height:18px;background:#f0f0f0;border:1px solid #d9d9d9;box-sizing:border-box;border-bottom:none;"></div>
<div class="a" style="left:741px;top:369px;width:109px;height:18px;background:#f0f0f0;border:1px solid #d9d9d9;box-sizing:border-box;border-bottom:none;"></div>
<div class="a" style="left:626px;top:367px;width:70px;height:21px;background:#ffffff;border:1px solid #d9d9d9;box-sizing:border-box;border-bottom:none;"></div>
<span class="t" style="left:636.5px;top:368px;font-size:11px;color:#000;transform:scaleX(0.9559);">DBHub.io</span>
<span class="t" style="left:704.5px;top:369px;font-size:11px;color:#000;transform:scaleX(0.9507);">Local</span>
<span class="t" style="left:752.9px;top:369px;font-size:11px;color:#000;letter-spacing:0.018px;">Current Database</span>
<svg style="left:639px;top:398px" width="16" height="16" viewBox="0 0 16 16"><g opacity="0.9"><g fill="none" stroke="#9c9c9c" stroke-width="3.300"><path d="M2.600 7.400C2.800 4.200 5.600 2.300 8.600 2.700c1.300.2 2.300.8 3.100 1.600"/><path d="M13.400 8.600c-.2 3.200-3 5.100-6 4.700-1.300-.2-2.300-.8-3.100-1.600"/></g><g fill="#9c9c9c" stroke="#9c9c9c" stroke-width="1" stroke-linejoin="round"><path d="M14.500 .9v6.300H8.300z"/><path d="M1.500 15.100V8.800h6.200z"/></g><g fill="none" stroke="#e4e4e4" stroke-width="1.500"><path d="M2.600 7.400C2.800 4.200 5.600 2.300 8.600 2.700c1.300.2 2.300.8 3.100 1.600"/><path d="M13.400 8.600c-.2 3.200-3 5.100-6 4.700-1.300-.2-2.300-.8-3.100-1.600"/></g><g fill="#e4e4e4"><path d="M13.700 2.800v3.600h-3.500z"/><path d="M2.300 13.200V9.600h3.500z"/></g></g></svg>
<svg style="left:670px;top:398px" width="16" height="16" viewBox="0 0 16 16"><path d="M1.200 2.400L4 .8h7.600v12.600H4l-2.800-1.600z" fill="#c9c9c9" stroke="#b4b4b4" stroke-width=".8" stroke-linejoin="round"/><path d="M5.500 3.500h4.600M5.500 5.500h4.600M5.500 7.500h3" stroke="#a8a8a8" stroke-width=".9"/><circle cx="12.600" cy="12.400" r="3.400" fill="#d6d6d6" stroke="#a4a4a4" stroke-width=".8"/><path d="M10.600 12.400h4M12.600 10.400v4" stroke="#fff" stroke-width="1.400"/></svg>
<div class="a" style="left:630px;top:429px;width:388px;height:211px;background:#ffffff;border:1px solid #828790;box-sizing:border-box;"></div>
<div class="a" style="left:930px;top:430px;width:1px;height:21px;background:#e5e5e5;"></div>
<span class="t" style="left:634px;top:431px;font-size:11px;color:#000;transform:scaleX(0.9372);">Name</span>
<span class="t" style="left:933.8px;top:431px;font-size:11px;color:#000;letter-spacing:-0.161px;">Last modified</span>
<div class="a" style="left:631px;top:624px;width:386px;height:15px;background:#f0f0f0;"></div>
<div class="a" style="left:648px;top:624px;width:214px;height:15px;background:#cdcdcd;"></div>
<svg style="left:636px;top:627px" width="6" height="9" viewBox="0 0 6 9"><path d="M5 .8L1.200 4.500 5 8.200" fill="none" stroke="#404040" stroke-width="1.700"/></svg>
<svg style="left:1006px;top:627px" width="6" height="9" viewBox="0 0 6 9"><path d="M1 .8l3.800 3.700L1 8.200" fill="none" stroke="#404040" stroke-width="1.700"/></svg>
<div class="a" style="left:608px;top:663px;width:434px;height:1px;background:#a0a0a0;"></div>
<div class="a" style="left:610px;top:664px;width:61px;height:18px;background:#f0f0f0;border:1px solid #d9d9d9;box-sizing:border-box;border-top:none;"></div>
<div class="a" style="left:670px;top:664px;width:44px;height:18px;background:#f0f0f0;border:1px solid #d9d9d9;box-sizing:border-box;border-top:none;"></div>
<div class="a" style="left:713px;top:664px;width:77px;height:18px;background:#f0f0f0;border:1px solid #d9d9d9;box-sizing:border-box;border-top:none;"></div>
<div class="a" style="left:789px;top:663px;width:62px;height:21px;background:#ffffff;border:1px solid #d9d9d9;box-sizing:border-box;border-top:none;"></div>
<span class="t" style="left:618.7px;top:663px;font-size:11px;color:#000;transform:scaleX(0.9299);">SQL Log</span>
<span class="t" style="left:681.2px;top:663px;font-size:11px;color:#000;transform:scaleX(1.0702);">Plot</span>
<span class="t" style="left:723.3px;top:663px;font-size:11px;color:#000;transform:scaleX(0.9267);">DB Schema</span>
<span class="t" style="left:800.7px;top:664px;font-size:11px;color:#000;letter-spacing:-0.146px;">Remote</span>
<span class="t" style="left:978.2px;top:689px;font-size:11px;color:#707070;transform:scaleX(0.9511);">UTF-16le</span>
<div class="a" style="left:1023px;top:686px;width:1px;height:23px;background:#d0d0d0;"></div>
<svg style="left:1030px;top:700px" width="10" height="10" viewBox="0 0 10 10"><g fill="#b8b8b8"><rect x="7" y="1" width="2" height="2"/><rect x="4" y="4" width="2" height="2"/><rect x="7" y="4" width="2" height="2"/><rect x="1" y="7" width="2" height="2"/><rect x="4" y="7" width="2" height="2"/><rect x="7" y="7" width="2" height="2"/></g></svg>
</body></html>
